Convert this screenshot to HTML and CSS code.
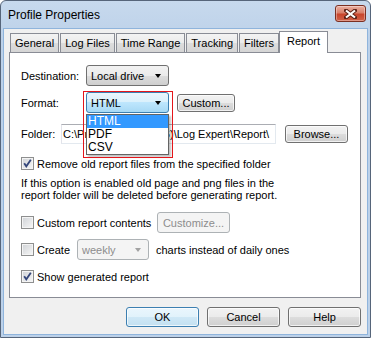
FILE: index.html
```html
<!DOCTYPE html>
<html lang="en">

<head>
    <meta charset="UTF-8">
    <title>Profile Properties</title>
    <link rel="stylesheet" href="styles.css">
</head>

<body>
    <div class="window">
        <div class="titleBar">
            <span class="title">Profile Properties</span>
            <span class="closeBtn">
                <svg width="13" height="10" viewBox="0 0 13 10">
                    <path d="M2 1.5 L11 8.5 M11 1.5 L2 8.5" stroke="#5b2117" stroke-width="4" stroke-linecap="square" />
                    <path d="M2 1.5 L11 8.5 M11 1.5 L2 8.5" stroke="#ffffff" stroke-width="2.2" />
                </svg>
            </span>
        </div>
        <div class="client">
            <div class="tabs">
                <span class="tab">General</span>
                <span class="tab">Log Files</span>
                <span class="tab">Time Range</span>
                <span class="tab">Tracking</span>
                <span class="tab">Filters</span>
                <span class="tab active">Report</span>
            </div>
            <div class="panel">
                <div class="row rowDest">
                    <span class="label labelWide">Destination:</span>
                    <span class="combo comboMain"><span>Local drive</span><i class="arrow"></i></span>
                </div>
                <div class="row rowFormat">
                    <span class="label labelWide">Format:</span>
                    <span class="combo comboMain focused"><span>HTML</span><i class="arrow"></i></span>
                    <span class="btn btnCustom">Custom...</span>
                    <!-- open list of the format combo -->
                    <div class="dropList">
                        <div class="item selected">HTML</div>
                        <div class="item">PDF</div>
                        <div class="item">CSV</div>
                    </div>
                    <div class="callout"></div>
                </div>
                <div class="row rowFolder">
                    <span class="label labelShort">Folder:</span>
                    <span class="textBox">C:\Program Files (x86)\Log Expert\Report\</span>
                    <span class="btn btnBrowse">Browse...</span>
                </div>
                <div class="row rowCheck rowRemove">
                    <span class="check checked">
                        <svg width="11" height="11" viewBox="0 0 11 11">
                            <path d="M2.2 5.2 L4.3 8.3 L8.8 1.8" fill="none" stroke="#34467a" stroke-width="1.8" />
                        </svg>
                    </span>
                    <span class="checkText">Remove old report files from the specified folder</span>
                </div>
                <p class="info">If this option is enabled old page and png files in the<br>report folder will be deleted before generating report.</p>
                <div class="row rowCustom">
                    <span class="checkWrap wrapCustom">
                        <span class="check"></span>
                        <span class="checkText">Custom report contents</span>
                    </span>
                    <span class="btn disabled btnCustomize">Customize...</span>
                </div>
                <div class="row rowCreate">
                    <span class="checkWrap wrapCreate">
                        <span class="check"></span>
                        <span class="checkText">Create</span>
                    </span>
                    <span class="combo disabled comboWeekly"><span>weekly</span><i class="arrow"></i></span>
                    <span class="afterText">charts instead of daily ones</span>
                </div>
                <div class="row rowCheck rowShow">
                    <span class="check checked">
                        <svg width="11" height="11" viewBox="0 0 11 11">
                            <path d="M2.2 5.2 L4.3 8.3 L8.8 1.8" fill="none" stroke="#34467a" stroke-width="1.8" />
                        </svg>
                    </span>
                    <span class="checkText">Show generated report</span>
                </div>
            </div>
            <div class="dialogButtons">
                <span class="btn btnDialog default">OK</span>
                <span class="btn btnDialog">Cancel</span>
                <span class="btn btnDialog">Help</span>
            </div>
        </div>
    </div>
</body>

</html>
```

FILE: styles.css
```css
body {
    margin: 0;
    font-family: "Liberation Sans", Arial, sans-serif;
    font-size: 11px;
    color: #000;
}

.window {
    width: 371px;
    height: 338px;
    box-sizing: border-box;
    border: 1px solid #56657a;
    border-radius: 6px 6px 0 0;
    background: linear-gradient(#c7d9ed, #bcd1e9 40px, #bcd1e9);
    padding: 0 2px 2px 2px;
    display: flex;
    flex-direction: column;
}

.titleBar {
    height: 27px;
    display: flex;
    justify-content: space-between;
    align-items: flex-start;
}

.title {
    font-size: 12px;
    margin: 7px 0 0 5px;
}

.closeBtn {
    width: 31px;
    height: 17px;
    margin: 4px 2px 0 0;
    box-sizing: border-box;
    border: 1px solid #7b2f22;
    border-radius: 3px;
    background: linear-gradient(#eab0a2, #d9806b 45%, #c8452c 55%, #d0624a);
    box-shadow: inset 0 0 0 1px rgba(255, 255, 255, 0.35);
    display: flex;
    align-items: center;
    justify-content: center;
}

.client {
    flex: 1;
    background: #f0f0f0;
    border: 1px solid #8fb4dc;
    padding: 2px 6px 0 5px;
    display: flex;
    flex-direction: column;
}

/* tab strip */
.tabs {
    height: 21px;
    display: flex;
    align-items: flex-end;
    margin-left: 1px;
}

.tab {
    height: 19px;
    box-sizing: border-box;
    padding: 3px 4px 0;
    margin-right: 1px;
    border: 1px solid #898c95;
    border-bottom: none;
    background: linear-gradient(#f3f3f3, #ebebeb 50%, #dddddd 50%, #d5d5d5);
}

.tab.active {
    height: 22px;
    margin-bottom: -1px;
    margin-left: -1px;
    position: relative;
    z-index: 1;
    background: #fff;
    padding: 3px 7px 0;
}

.panel {
    height: 246px;
    box-sizing: border-box;
    border: 1px solid #898c95;
    background: #fff;
    padding: 12px 11px 0;
}

.row {
    display: flex;
    align-items: center;
}

.rowDest {
    height: 21px;
}

.rowFormat {
    height: 21px;
    margin-top: 6px;
    position: relative;
}

.rowFolder {
    height: 20px;
    margin-top: 11px;
}

.rowCheck {
    height: 13px;
}

.rowRemove {
    margin-top: 13px;
}

.rowCustom {
    height: 21px;
    margin-top: 11px;
}

.rowCreate {
    height: 21px;
    margin-top: 6px;
}

.rowShow {
    margin-top: 10px;
}

.labelWide {
    width: 65px;
}

.labelShort {
    width: 40px;
}

/* combo boxes */
.combo {
    height: 21px;
    box-sizing: border-box;
    border: 1px solid #707070;
    border-radius: 3px;
    background: linear-gradient(#f2f2f2, #ebebeb 50%, #dddddd 50%, #cfcfcf);
    display: flex;
    align-items: center;
    justify-content: space-between;
    padding: 0 7px 0 4px;
}

.comboMain {
    width: 83px;
}

.combo.focused {
    border-color: #3c7fb1;
    background: linear-gradient(#eaf6fd, #d9f0fc 50%, #bee6fd 50%, #a7d9f5);
}

.arrow {
    width: 0;
    height: 0;
    border-left: 3.5px solid transparent;
    border-right: 3.5px solid transparent;
    border-top: 4px solid #000;
}

.combo.disabled {
    border-color: #adb2b5;
    background: #f4f4f4;
    color: #8d8d8d;
}

.combo.disabled .arrow {
    border-top-color: #a2a2a2;
}

.comboWeekly {
    width: 72px;
    padding-left: 4px;
}

/* buttons */
.btn {
    box-sizing: border-box;
    border: 1px solid #707070;
    border-radius: 3px;
    background: linear-gradient(#f2f2f2, #ebebeb 50%, #dddddd 50%, #cfcfcf);
    display: flex;
    align-items: center;
    justify-content: center;
    box-shadow: inset 0 0 0 1px rgba(255, 255, 255, 0.7);
}

.btnCustom {
    width: 58px;
    height: 18px;
    margin-left: 8px;
}

.btnBrowse {
    width: 63px;
    height: 18px;
    margin-left: 9px;
}

.btn.disabled {
    border-color: #adb2b5;
    background: #f4f4f4;
    color: #8d8d8d;
    box-shadow: none;
}

.btnCustomize {
    width: 73px;
    height: 21px;
}

.dialogButtons {
    display: flex;
    justify-content: flex-end;
    gap: 8px;
    margin-top: 9px;
}

.btnDialog {
    width: 73px;
    height: 20px;
}

.btnDialog.default {
    border-color: #3c7fb1;
    background: linear-gradient(#eaf6fd, #e1f2fb 50%, #cfe8f6 50%, #c3e0f1);
}

/* text box */
.textBox {
    width: 215px;
    height: 20px;
    box-sizing: border-box;
    border: 1px solid #e3e9ef;
    border-top-color: #abadb3;
    border-left-color: #e2e3ea;
    padding: 3px 1px 0;
    white-space: nowrap;
    overflow: hidden;
}

/* check boxes */
.check {
    width: 13px;
    height: 13px;
    box-sizing: border-box;
    border: 1px solid #8e8f8f;
    background: linear-gradient(135deg, #cfd2d6, #f7f7f7);
    box-shadow: inset 0 0 0 1px #f4f4f4;
    display: flex;
    align-items: center;
    justify-content: center;
}

.checkText {
    margin-left: 3px;
}

.checkWrap {
    display: flex;
    align-items: center;
}

.wrapCustom {
    width: 136px;
}

.wrapCreate {
    width: 56px;
}

.afterText {
    margin-left: 7px;
}

.info {
    margin: 7px 0 0;
    line-height: 12px;
}

/* open drop-down list */
.dropList {
    position: absolute;
    left: 65px;
    top: 22px;
    width: 83px;
    box-sizing: border-box;
    border: 1px solid #646464;
    background: #fff;
    box-shadow: 2px 2px 2px rgba(0, 0, 0, 0.25);
    z-index: 2;
}

.item {
    height: 13px;
    line-height: 13px;
    padding-left: 1px;
    font-size: 12px;
}

.item.selected {
    background: #3399ff;
    color: #fff;
}

.callout {
    position: absolute;
    left: 62px;
    top: -1px;
    width: 90px;
    height: 67px;
    box-sizing: border-box;
    border: 1px solid #e4161b;
    z-index: 3;
}
```
